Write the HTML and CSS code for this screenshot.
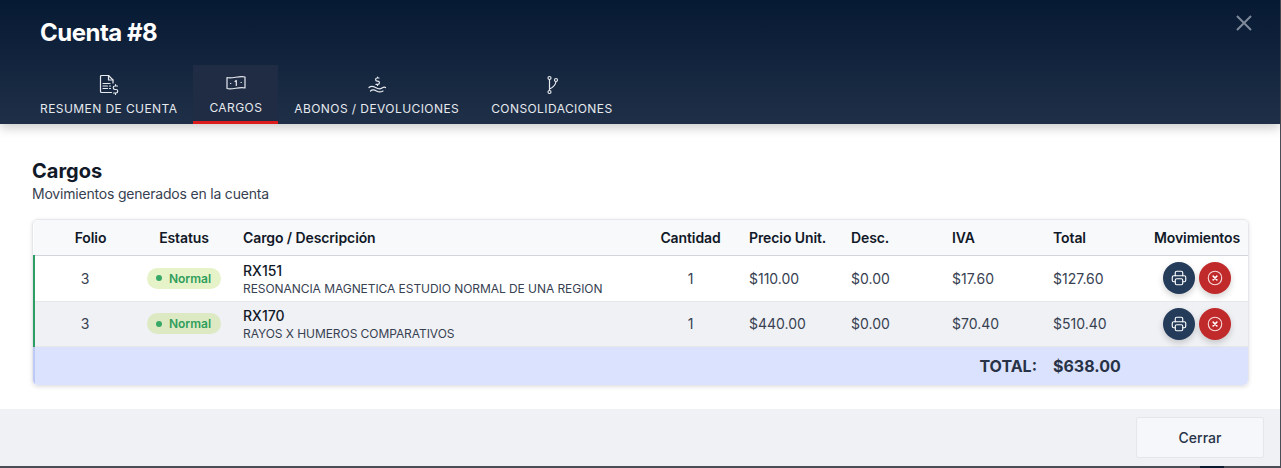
FILE: index.html
```html
<!DOCTYPE html>
<html lang="en">
<head>
    <meta charset="UTF-8">
    <meta name="viewport" content="width=device-width, initial-scale=1.0">
    <title>Cuenta #8</title>
    <link rel="stylesheet" href="styles.css">
</head>
<body>
    <div class="modal">
        <header class="modal-header">
            <div class="title-row">
                <h1>Cuenta #8</h1>
                <button class="close-btn" aria-label="Cerrar">
                    <svg width="20" height="20" viewBox="0 0 20 20"><path d="M3 3 17 17M17 3 3 17"/></svg>
                </button>
            </div>
            <nav class="tabs">
                <a class="tab">
                    <svg class="tab-icon" width="24" height="24" viewBox="0 0 24 24"><path d="M14.500 19.500H4.500A1 1 0 0 1 3.500 18.500V3.500A1 1 0 0 1 4.500 2.500H11.500L16 7V10"/><path d="M11.500 2.500V7H16"/><path d="M6 10.500H13M6 13H10.500M6 15.500H10.500M12.500 13H13.500M12.500 15.500H13.500"/><path d="M20.500 13H18A1.300 1.300 0 0 0 18 16.500H19A1.300 1.300 0 0 1 19 20H16.500M18.500 11.500V13M18.500 20V21.500"/></svg>
                    <span>Resumen de cuenta</span>
                </a>
                <a class="tab active">
                    <svg class="tab-icon" width="24" height="24" viewBox="0 0 24 24"><path d="M3 6.500C8 8 15.500 4.500 21 6V17C15.500 15.500 8 19 3 17.500Z"/><path d="M11 10.500 12.300 9.500V14.500"/><path d="M6.500 12.500H6.800M17 11.500H17.300"/></svg>
                    <span>Cargos</span>
                </a>
                <a class="tab">
                    <svg class="tab-icon" width="24" height="24" viewBox="0 0 24 24"><path d="M14 5H12.200A1.100 1.100 0 0 0 12.200 8.200H12.800A1.100 1.100 0 0 1 12.800 11.400H11M12.500 4V5M12.500 11.400V12.400"/><path d="M4 14.500C6 12.500 8 13 10.500 14.500S15 16.500 17 15C18.500 14 20 14 20.500 14.500"/><path d="M5.500 18C7 16.500 9 16.500 11.500 18S15.500 19.500 18 18"/></svg>
                    <span>Abonos / Devoluciones</span>
                </a>
                <a class="tab">
                    <svg class="tab-icon" width="24" height="24" viewBox="0 0 24 24"><circle cx="9.500" cy="5" r="1.500"/><circle cx="9.500" cy="19" r="1.500"/><circle cx="16" cy="7" r="1.500"/><path d="M9.500 6.500V17.500M9.500 16C13 14.500 15.500 12 16 8.500"/></svg>
                    <span>Consolidaciones</span>
                </a>
            </nav>
        </header>

        <main class="modal-body">
            <h2>Cargos</h2>
            <p class="subtitle">Movimientos generados en la cuenta</p>

            <div class="table-card">
                <table>
                    <colgroup>
                        <col class="col-folio">
                        <col class="col-status">
                        <col>
                        <col class="col-qty">
                        <col class="col-price">
                        <col class="col-money">
                        <col class="col-money">
                        <col class="col-money">
                        <col class="col-actions">
                    </colgroup>
                    <thead>
                        <tr>
                            <th class="center folio-head">Folio</th>
                            <th class="center">Estatus</th>
                            <th>Cargo / Descripción</th>
                            <th class="center qty">Cantidad</th>
                            <th>Precio Unit.</th>
                            <th>Desc.</th>
                            <th>IVA</th>
                            <th>Total</th>
                            <th class="center">Movimientos</th>
                        </tr>
                    </thead>
                    <tbody>
                        <tr class="row">
                            <td class="center">3</td>
                            <td class="center"><span class="badge"><i class="dot"></i>Normal</span></td>
                            <td class="charge"><div class="code">RX151</div><div class="desc">RESONANCIA MAGNETICA ESTUDIO NORMAL DE UNA REGION</div></td>
                            <td class="center qty">1</td>
                            <td>$110.00</td>
                            <td>$0.00</td>
                            <td>$17.60</td>
                            <td>$127.60</td>
                            <td>
                                <div class="actions">
                                    <button class="round-btn print" aria-label="Imprimir"><svg width="18" height="18" viewBox="0 0 24 24"><path d="M17 17H19A2 2 0 0 0 21 15V11A2 2 0 0 0 19 9H5A2 2 0 0 0 3 11V15A2 2 0 0 0 5 17H7"/><path d="M17 9V5A2 2 0 0 0 15 3H9A2 2 0 0 0 7 5V9"/><rect x="7" y="13" width="10" height="8" rx="2"/></svg></button>
                                    <button class="round-btn cancel" aria-label="Cancelar"><svg width="18" height="18" viewBox="0 0 24 24"><circle cx="12" cy="12" r="9"/><path class="cross" d="M9.500 9.500 14.500 14.500M14.500 9.500 9.500 14.500"/></svg></button>
                                </div>
                            </td>
                        </tr>
                        <tr class="row alt">
                            <td class="center">3</td>
                            <td class="center"><span class="badge"><i class="dot"></i>Normal</span></td>
                            <td class="charge"><div class="code">RX170</div><div class="desc">RAYOS X HUMEROS COMPARATIVOS</div></td>
                            <td class="center qty">1</td>
                            <td>$440.00</td>
                            <td>$0.00</td>
                            <td>$70.40</td>
                            <td>$510.40</td>
                            <td>
                                <div class="actions">
                                    <button class="round-btn print" aria-label="Imprimir"><svg width="18" height="18" viewBox="0 0 24 24"><path d="M17 17H19A2 2 0 0 0 21 15V11A2 2 0 0 0 19 9H5A2 2 0 0 0 3 11V15A2 2 0 0 0 5 17H7"/><path d="M17 9V5A2 2 0 0 0 15 3H9A2 2 0 0 0 7 5V9"/><rect x="7" y="13" width="10" height="8" rx="2"/></svg></button>
                                    <button class="round-btn cancel" aria-label="Cancelar"><svg width="18" height="18" viewBox="0 0 24 24"><circle cx="12" cy="12" r="9"/><path class="cross" d="M9.500 9.500 14.500 14.500M14.500 9.500 9.500 14.500"/></svg></button>
                                </div>
                            </td>
                        </tr>
                    </tbody>
                    <tfoot>
                        <tr class="total-row">
                            <td colspan="7" class="total-label">TOTAL:</td>
                            <td colspan="2" class="total-value">$638.00</td>
                        </tr>
                    </tfoot>
                </table>
            </div>
        </main>

        <footer class="modal-footer">
            <button class="btn-close">Cerrar</button>
        </footer>
    </div>
    <div class="backdrop-notch"></div>
</body>
</html>
```

FILE: styles.css
```css
* {
    box-sizing: border-box;
}

body {
    margin: 0;
    height: 100vh;
    overflow: hidden;
    background: #4a4d55;
    font-family: Inter, "Liberation Sans", sans-serif;
    color: #1f2937;
}

.modal {
    width: 1280px;
    height: 466px;
    display: flex;
    flex-direction: column;
    background: #fff;
}

/* bit of the page behind the modal */
.backdrop-notch {
    position: absolute;
    left: 1200px;
    top: 466px;
    width: 24px;
    height: 2px;
    background: #0b1a30;
}

/* Header */
.modal-header {
    height: 124px;
    padding: 0 24px;
    background: linear-gradient(180deg, #071a33 0%, #1f2f48 100%);
    box-shadow: 0 4px 10px rgba(0, 0, 0, 0.2);
    color: #fff;
    position: relative;
    display: flex;
    flex-direction: column;
}

.title-row {
    height: 65px;
    display: flex;
    justify-content: space-between;
    padding: 17px 0 0 16px;
}

h1 {
    margin: 0;
    font-size: 24px;
    line-height: 32px;
    font-weight: 700;
    letter-spacing: -0.5px;
}

.close-btn {
    width: 20px;
    height: 20px;
    padding: 0;
    margin: -4px 2px 0 0;
    border: none;
    background: none;
}

.close-btn svg {
    display: block;
    fill: none;
    stroke: #7f8a9b;
    stroke-width: 2;
}

.tabs {
    display: flex;
    flex: 1;
}

.tab {
    display: flex;
    flex-direction: column;
    align-items: center;
    justify-content: center;
    gap: 4px;
    padding: 1px 16px 0;
    font-size: 12px;
    line-height: 16px;
    font-weight: 400;
    letter-spacing: 0.42px;
    text-transform: uppercase;
    color: #e6e9ee;
}

.tab.active {
    background: #1f2c44;
    border-bottom: 3px solid #dc1c1c;
    padding: 0 16px;
    gap: 5px;
}

.tab-icon {
    fill: none;
    stroke: #e6e9ee;
    stroke-width: 1.2;
    stroke-linecap: round;
    stroke-linejoin: round;
}

/* Body */
.modal-body {
    flex: 1;
    padding: 36px 32px 0;
}

h2 {
    margin: 0;
    font-size: 20px;
    line-height: 22px;
    font-weight: 700;
    color: #111827;
}

.subtitle {
    margin: 2px 0 15px;
    font-size: 14px;
    line-height: 20px;
    letter-spacing: -0.2px;
    color: #374151;
}

.table-card {
    width: 1217px;
    border: 1px solid #e5e7eb;
    border-radius: 6px;
    box-shadow: 0 1px 4px rgba(0, 0, 0, 0.12);
    overflow: hidden;
}

table {
    width: 100%;
    border-collapse: collapse;
    table-layout: fixed;
    font-size: 14px;
}

.col-folio {
    width: 101px;
}

.col-status {
    width: 98px;
}

.col-qty {
    width: 99px;
}

.col-price {
    width: 102px;
}

.col-money {
    width: 101px;
}

.col-actions {
    width: 104px;
}

th {
    height: 35px;
    padding: 0 10px;
    background: #f8f9fb;
    border-bottom: 1px solid #d1d5db;
    font-weight: 600;
    letter-spacing: -0.1px;
    text-align: left;
    color: #111827;
}

td {
    padding: 0 10px;
    color: #374151;
}

.center {
    text-align: center;
}

th.folio-head {
    padding-left: 22px;
}

th.qty,
td.qty {
    padding-left: 12px;
}

td.charge {
    padding-top: 2px;
}

.row {
    height: 46px;
    border-bottom: 1px solid #e5e7eb;
}

.row.alt {
    height: 45px;
    background: #f0f1f5;
}

.row td:first-child {
    border-left: 2px solid #2f9e63;
}

.badge {
    display: inline-flex;
    align-items: center;
    height: 21px;
    padding: 0 10px 0 9px;
    border-radius: 11px;
    background: #e6f2c8;
    color: #2f9e5c;
    font-size: 12px;
    font-weight: 600;
}

.alt .badge {
    background: #dce9c2;
}

.dot {
    width: 6px;
    height: 6px;
    margin-right: 7px;
    border-radius: 50%;
    background: #38a866;
}

.code {
    font-size: 14px;
    line-height: 17px;
    font-weight: 500;
    color: #111827;
}

.desc {
    margin-top: 1px;
    font-size: 12px;
    line-height: 17px;
    letter-spacing: -0.06px;
    color: #374151;
}

.actions {
    display: flex;
    justify-content: center;
    gap: 4px;
    padding-left: 1px;
}

.round-btn {
    width: 32px;
    height: 32px;
    padding: 0;
    border: none;
    border-radius: 50%;
    display: flex;
    align-items: center;
    justify-content: center;
    box-shadow: 0 3px 6px rgba(0, 0, 0, 0.18);
}

.round-btn svg {
    fill: none;
    stroke: #fff;
    stroke-width: 1.5;
    stroke-linecap: round;
    stroke-linejoin: round;
}

.print {
    background: #243b5a;
}

.cancel {
    background: #c12a2a;
}

.cancel svg {
    stroke: #f6dcdc;
}

.cancel .cross {
    stroke: #fff;
    stroke-width: 2;
}

.total-row {
    height: 39px;
    background: #dbe2fd;
}

.total-row td {
    font-size: 16px;
    font-weight: 700;
    color: #283347;
}

.total-row .total-label {
    text-align: right;
    border-left: 2px solid #bdcaf7;
    padding-right: 6px;
}

/* Footer */
.modal-footer {
    height: 57px;
    margin-top: auto;
    padding: 8px 16px 0 0;
    background: #f0f1f5;
    display: flex;
    justify-content: flex-end;
    align-items: flex-start;
}

.btn-close {
    width: 128px;
    height: 41px;
    border: 1px solid #e4e6eb;
    border-radius: 2px;
    background: #f5f7fb;
    font-family: inherit;
    font-size: 14px;
    font-weight: 500;
    color: #283347;
}
```
